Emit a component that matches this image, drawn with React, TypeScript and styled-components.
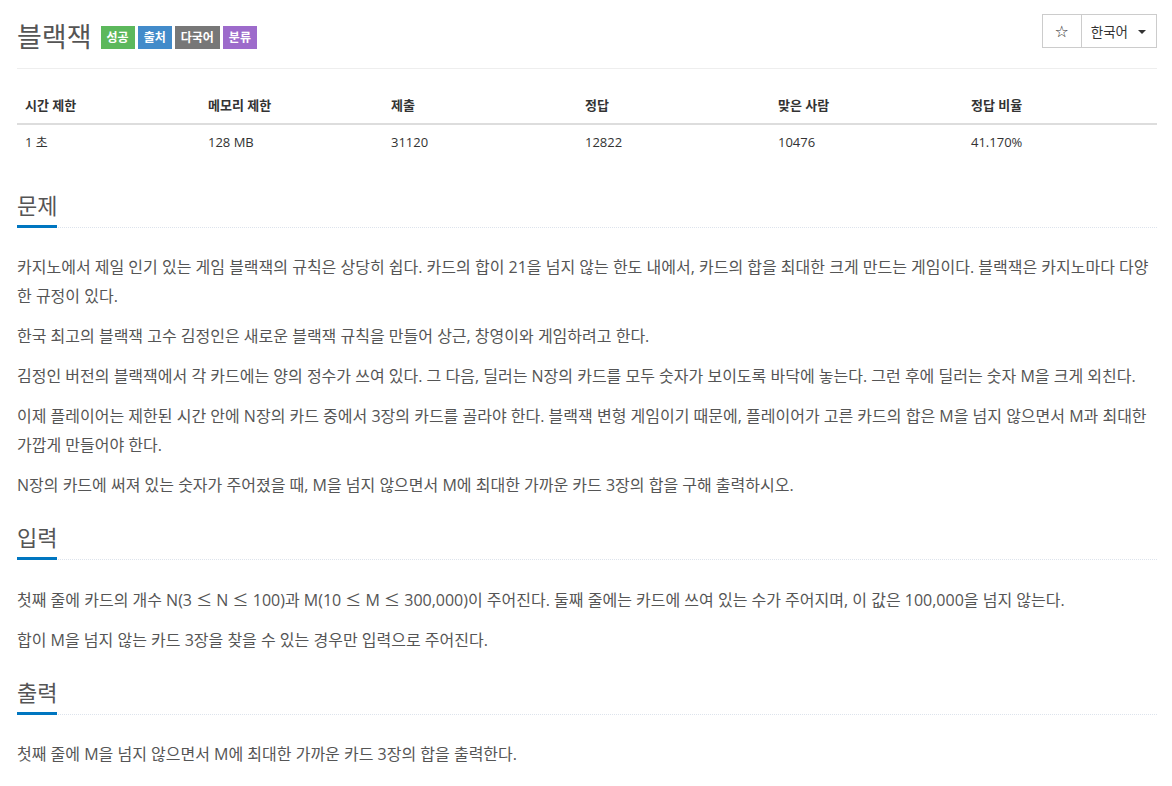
import React from "react";
import styled, { createGlobalStyle } from "styled-components";

const Global = createGlobalStyle`
  html, body { margin: 0; padding: 0; background: #fff; }
  body {
    font-family: "Open Sans", "Noto Sans CJK KR", sans-serif;
    color: #555;
    font-size: 13px;
  }
  * { box-sizing: border-box; }
`;

const Page = styled.div`
  padding: 0 15px 40px 17px;
  display: flex;
  flex-direction: column;
`;

const HeaderRow = styled.div`
  display: flex;
  justify-content: space-between;
  align-items: flex-start;
  padding-top: 14px;
  height: 69px;
  border-bottom: 1px solid #eee;
`;

const TitleGroup = styled.div`
  display: flex;
  align-items: center;
  margin-top: 9px;
  height: 28px;
`;

const Title = styled.h1`
  margin: 0 9px 0 0;
  font-size: 27px;
  font-weight: 400;
  line-height: 28px;
  color: #555;
`;

const Badge = styled.span<{ $bg: string }>`
  display: inline-flex;
  align-items: center;
  height: 23px;
  padding: 0 6px;
  margin-right: 3px;
  margin-top: 1px;
  background: ${(p) => p.$bg};
  color: #fff;
  font-size: 12px;
  font-weight: 700;
  line-height: 1;
`;

const ButtonGroup = styled.div`
  display: flex;
  height: 34px;
`;

const GroupButton = styled.button`
  display: flex;
  align-items: center;
  gap: 10px;
  height: 34px;
  background: #fff;
  border: 1px solid #ccc;
  color: #333;
  font-family: "Open Sans", "Noto Sans CJK KR", sans-serif;
  font-size: 13.5px;
  padding: 0 10px 0 9px;
  & + & { margin-left: -1px; }
`;

const StarButton = styled(GroupButton)`
  width: 40px;
  justify-content: center;
  padding: 0;
  font-size: 16px;
  font-family: "DejaVu Sans", sans-serif;
`;

const Caret = styled.span`
  width: 0;
  height: 0;
  border-left: 4px solid transparent;
  border-right: 4px solid transparent;
  border-top: 4px solid #333;
  margin-top: 1px;
`;

const Table = styled.table`
  margin-top: 19px;
  width: 100%;
  border-collapse: collapse;
  color: #333;
  font-size: 13px;
  line-height: 18.57px;
`;

const Th = styled.th`
  text-align: left;
  font-size: 13px;
  font-weight: 700;
  padding: 8px;
  line-height: 18.57px;
  border-bottom: 2px solid #ddd;
`;

const Td = styled.td`
  padding: 8px;
`;

const Section = styled.section<{ $first?: boolean }>`
  margin-top: ${(p) => (p.$first ? "35px" : "15px")};
`;

const Headline = styled.div`
  border-bottom: 1px dotted #dde3ec;
  margin-bottom: 25px;
`;

const HeadlineText = styled.h2`
  display: inline-block;
  margin: 0 0 -1px 0;
  font-size: 22px;
  font-weight: 400;
  line-height: 22px;
  padding-bottom: 9px;
  color: #555;
  border-bottom: 3px solid #0076c0;
`;

const Para = styled.p`
  margin: 0 0 11px;
  font-size: 16px;
  line-height: 29px;
  color: #555;
`;

const Sym = styled.span`
  font-family: "Noto Sans CJK KR", sans-serif;
`;

const badges = [
  { t: "성공", c: "#5cb85c" },
  { t: "출처", c: "#428bca" },
  { t: "다국어", c: "#777777" },
  { t: "분류", c: "#9d6bcb" },
];

const cols = [
  { h: "시간 제한", v: "1 초", w: 183 },
  { h: "메모리 제한", v: "128 MB", w: 183 },
  { h: "제출", v: "31120", w: 194 },
  { h: "정답", v: "12822", w: 193 },
  { h: "맞은 사람", v: "10476", w: 193 },
  { h: "정답 비율", v: "41.170%", w: 194 },
];

const le = <Sym>≤</Sym>;

const sections: { title: string; paras: React.ReactNode[] }[] = [
  {
    title: "문제",
    paras: [
      "카지노에서 제일 인기 있는 게임 블랙잭의 규칙은 상당히 쉽다. 카드의 합이 21을 넘지 않는 한도 내에서, 카드의 합을 최대한 크게 만드는 게임이다. 블랙잭은 카지노마다 다양한 규정이 있다.",
      "한국 최고의 블랙잭 고수 김정인은 새로운 블랙잭 규칙을 만들어 상근, 창영이와 게임하려고 한다.",
      "김정인 버전의 블랙잭에서 각 카드에는 양의 정수가 쓰여 있다. 그 다음, 딜러는 N장의 카드를 모두 숫자가 보이도록 바닥에 놓는다. 그런 후에 딜러는 숫자 M을 크게 외친다.",
      "이제 플레이어는 제한된 시간 안에 N장의 카드 중에서 3장의 카드를 골라야 한다. 블랙잭 변형 게임이기 때문에, 플레이어가 고른 카드의 합은 M을 넘지 않으면서 M과 최대한 가깝게 만들어야 한다.",
      "N장의 카드에 써져 있는 숫자가 주어졌을 때, M을 넘지 않으면서 M에 최대한 가까운 카드 3장의 합을 구해 출력하시오.",
    ],
  },
  {
    title: "입력",
    paras: [
      <>
        첫째 줄에 카드의 개수 N(3 {le} N {le} 100)과 M(10 {le} M {le} 300,000)이 주어진다. 둘째 줄에는 카드에 쓰여 있는 수가 주어지며, 이 값은 100,000을 넘지 않는다.
      </>,
      "합이 M을 넘지 않는 카드 3장을 찾을 수 있는 경우만 입력으로 주어진다.",
    ],
  },
  {
    title: "출력",
    paras: ["첫째 줄에 M을 넘지 않으면서 M에 최대한 가까운 카드 3장의 합을 출력한다."],
  },
];

export default function App() {
  return (
    <>
      <Global />
      <Page>
        <HeaderRow>
          <TitleGroup>
            <Title>블랙잭</Title>
            {badges.map((b) => (
              <Badge key={b.t} $bg={b.c}>
                {b.t}
              </Badge>
            ))}
          </TitleGroup>
          <ButtonGroup>
            <StarButton>☆</StarButton>
            <GroupButton>
              한국어 <Caret />
            </GroupButton>
          </ButtonGroup>
        </HeaderRow>
        <Table>
          <colgroup>
            {cols.map((c) => (
              <col key={c.h} style={{ width: c.w }} />
            ))}
          </colgroup>
          <thead>
            <tr>
              {cols.map((c) => (
                <Th key={c.h}>{c.h}</Th>
              ))}
            </tr>
          </thead>
          <tbody>
            <tr>
              {cols.map((c) => (
                <Td key={c.h}>{c.v}</Td>
              ))}
            </tr>
          </tbody>
        </Table>
        {sections.map((s, i) => (
          <Section key={s.title} $first={i === 0}>
            <Headline>
              <HeadlineText>{s.title}</HeadlineText>
            </Headline>
            {s.paras.map((p, j) => (
              <Para key={j}>{p}</Para>
            ))}
          </Section>
        ))}
      </Page>
    </>
  );
}
